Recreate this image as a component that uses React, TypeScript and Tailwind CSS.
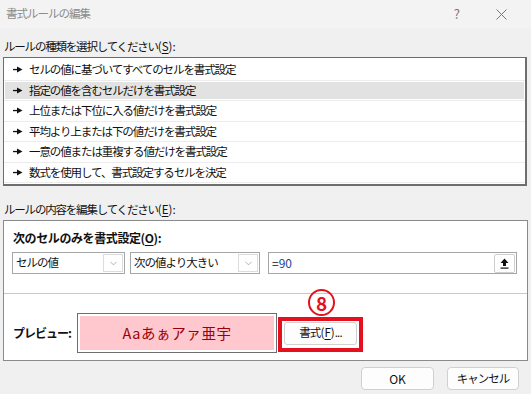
import { ChevronDown } from 'lucide-react';

const RULES = [
  'セルの値に基づいてすべてのセルを書式設定',
  '指定の値を含むセルだけを書式設定',
  '上位または下位に入る値だけを書式設定',
  '平均より上または下の値だけを書式設定',
  '一意の値または重複する値だけを書式設定',
  '数式を使用して、書式設定するセルを決定',
];

const FONT = "font-['Noto_Sans_CJK_JP','Noto_Sans',sans-serif]";

function RuleArrow() {
  return (
    <svg width="10" height="7" viewBox="0 0 10 7" className="shrink-0">
      <rect x="0" y="2.9" width="5" height="1.3" fill="#111" />
      <path d="M4 0.6 L9.5 3.55 L4 6.4 Z" fill="#111" />
    </svg>
  );
}

function Key({ k }: { k: string }) {
  return (
    <span className="tracking-normal">
      (<span className="underline underline-offset-2">{k}</span>)
    </span>
  );
}

function Select({ label, width }: { label: string; width: string }) {
  return (
    <div className={`flex h-[22px] items-center border border-[#a6a6a6] bg-white ${width}`}>
      <span className="flex-1 pl-[3px] text-[11.5px] tracking-[-1px] text-[#111]">{label}</span>
      <span className="mr-[1px] flex h-[18px] w-[20px] items-center justify-center border border-[#dcdcdc] bg-white">
        <ChevronDown size={11} strokeWidth={1.2} className="text-[#777]" />
      </span>
    </div>
  );
}

export default function App() {
  return (
    <div className={`h-[394px] w-[531px] overflow-hidden bg-[#f0f0f0] text-[#111] ${FONT}`}>
      {/* title bar */}
      <div className="flex h-[28px] items-center bg-[#f3f3f3] pl-[6px] pr-[24px]">
        <span className="flex-1 text-[11.5px] tracking-[-1px] text-[#8c8c8c]">書式ルールの編集</span>
        <span className="mr-[36px] text-[13px] text-[#777]">?</span>
        <svg width="11" height="11" viewBox="0 0 11 11">
          <path d="M0.5 0.5 L10.5 10.5 M10.5 0.5 L0.5 10.5" stroke="#777" strokeWidth="1" />
        </svg>
      </div>

      <div className="px-[3px]">
        <div className="mt-[11px] pl-[1px] text-[11.5px] leading-[14px] tracking-[-1.2px]">
          ルールの種類を選択してください<Key k="S" />:
        </div>

        {/* rule type list */}
        <div className="mt-[4px] h-[129px] w-[524px] border border-r-2 border-b-2 border-[#6e6e6e] bg-white pt-[2px]">
          {RULES.map((rule, i) => (
            <div key={rule} className="h-[20.5px] border-b border-[#ececec] px-[1px] py-[1.5px]">
              <div
                className={`flex h-full items-center gap-[6px] pl-[8px] ${i === 1 ? 'bg-[#e2e2e2]' : ''}`}
              >
                <RuleArrow />
                <span className="text-[11.5px] tracking-[-1.1px]">{rule}</span>
              </div>
            </div>
          ))}
        </div>

        <div className="mt-[16px] pl-[1px] text-[11.5px] leading-[14px] tracking-[-1.2px]">
          ルールの内容を編集してください<Key k="E" />:
        </div>

        {/* rule description box */}
        <div className="mt-[4px] h-[141px] w-[525px] border border-[#8a8a8a] bg-white">
          <div className="px-[9px] pt-[10px] text-[12px] font-bold leading-[14px] tracking-[-0.4px]">
            次のセルのみを書式設定(<span className="underline underline-offset-2">O</span>):
          </div>
          <div className="mt-[7px] flex items-center pl-[8px]">
            <Select label="セルの値" width="w-[113px]" />
            <div className="w-[5px]" />
            <Select label="次の値より大きい" width="w-[130px]" />
            <div className="w-[8px]" />
            <div className="flex h-[22px] w-[249px] items-center border border-[#a6a6a6] bg-white">
              <span className="flex-1 pl-[3px] text-[12px] text-[#111]">
                =<span className="text-[#1f3f8f]">90</span>
              </span>
              <span className="mr-[1px] flex h-[19px] w-[21px] items-center justify-center rounded-[2px] border border-[#cfcfcf] bg-white">
                <svg width="9" height="11" viewBox="0 0 9 11">
                  <path d="M4.5 0.5 L8.5 5 L6 5 L6 8 L3 8 L3 5 L0.5 5 Z" fill="#111" />
                  <rect x="0.5" y="9.5" width="8" height="1.2" fill="#111" />
                </svg>
              </span>
            </div>
          </div>

          <div className="mt-[19px] h-px bg-[#c8c8c8]" />

          <div className="mt-[19px] flex items-center pl-[9px]">
            <span className="w-[64px] text-[12px] font-bold tracking-[-1px]">プレビュー:</span>
            <div className="flex h-[40px] w-[200px] border border-[#6e6e6e] bg-white p-[2px]">
              <div className="flex flex-1 items-center justify-center bg-[#ffc7ce] text-[14.5px] tracking-[0.6px] text-[#9c0006]">
                Aaあぁアァ亜宇
              </div>
            </div>

            {/* format button with annotation */}
            <div className="relative ml-[7px]">
              <div className="flex h-[23px] w-[73px] items-center justify-center rounded-[3px] border border-[#d0d0d0] bg-[#fdfdfd] text-[11.5px] tracking-[-0.8px]">
                書式<Key k="F" />...
              </div>
              <div className="pointer-events-none absolute -top-[5px] -left-[6px] h-[35px] w-[85px] border-[4px] border-[#e5101f]" />
              <div className="absolute -top-[33px] left-[24px] flex h-[27px] w-[27px] items-center justify-center rounded-full border-[2.5px] border-[#e5101f] text-[19px] font-bold leading-none text-[#e5101f]">
                8
              </div>
            </div>
          </div>
        </div>

        {/* bottom buttons */}
        <div className="mt-[6px] flex justify-end gap-[13px] pr-[9px]">
          <div className="flex h-[23px] w-[73px] items-center justify-center rounded-[4px] border border-[#d0d0d0] bg-[#fdfdfd] text-[12px]">
            OK
          </div>
          <div className="flex h-[23px] w-[72px] items-center justify-center rounded-[4px] border border-[#d0d0d0] bg-[#fdfdfd] text-[11.5px] tracking-[-1px]">
            キャンセル
          </div>
        </div>
      </div>
    </div>
  );
}
